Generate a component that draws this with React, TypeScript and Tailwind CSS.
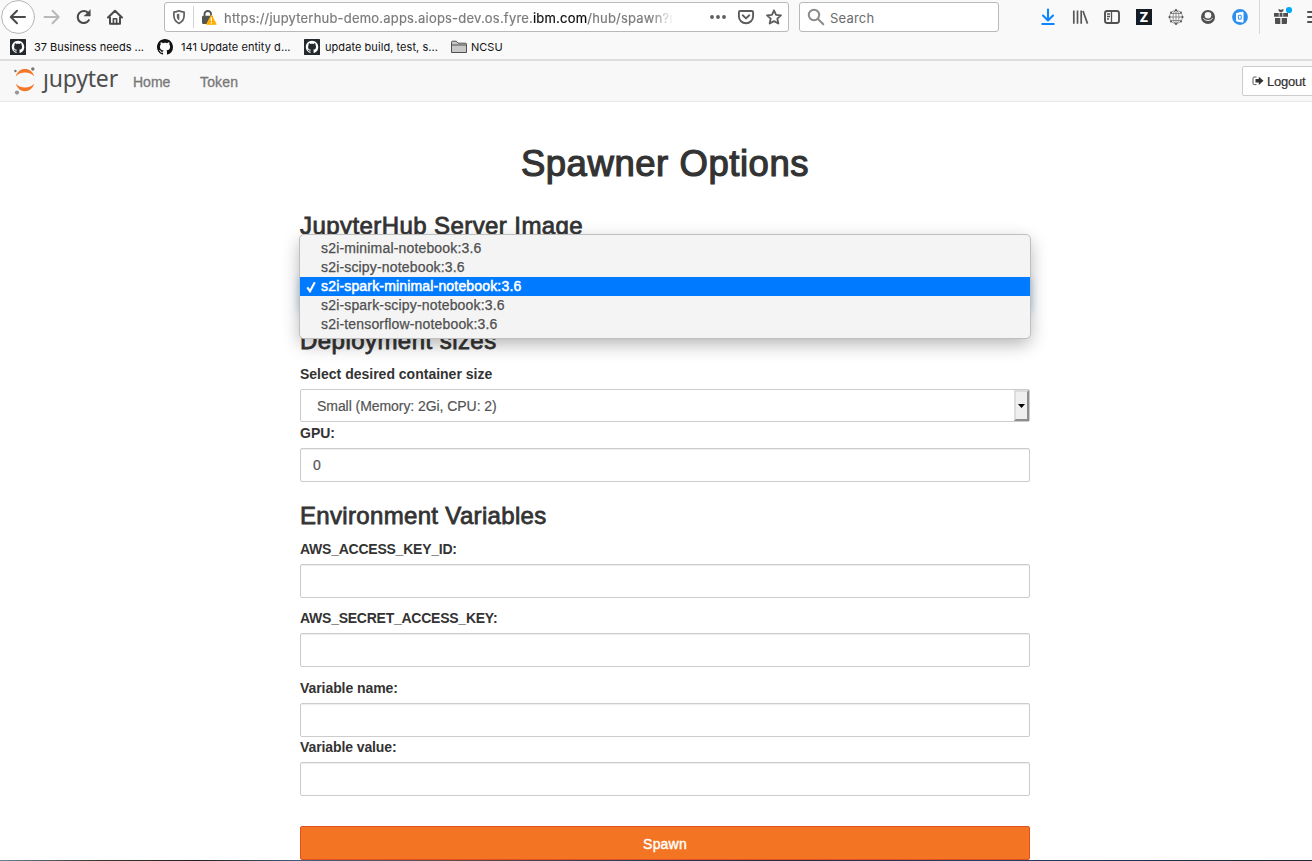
import type { ReactNode } from 'react';

const ui = "font-['Inter',sans-serif]";

function GithubMark({ boxed }: { boxed?: boolean }) {
  const d =
    'M8 0C3.58 0 0 3.58 0 8c0 3.54 2.29 6.53 5.47 7.59.4.07.55-.17.55-.38 0-.19-.01-.82-.01-1.49-2.01.37-2.53-.49-2.69-.94-.09-.23-.48-.94-.82-1.13-.28-.15-.68-.52-.01-.53.63-.01 1.08.58 1.23.82.72 1.21 1.87.87 2.33.66.07-.52.28-.87.51-1.07-1.78-.2-3.64-.89-3.64-3.95 0-.87.31-1.59.82-2.15-.08-.2-.36-1.02.08-2.12 0 0 .67-.21 2.2.82.64-.18 1.32-.27 2-.27s1.36.09 2 .27c1.53-1.04 2.2-.82 2.2-.82.44 1.1.16 1.92.08 2.12.51.56.82 1.27.82 2.15 0 3.07-1.87 3.75-3.65 3.95.29.25.54.73.54 1.48 0 1.07-.01 1.93-.01 2.2 0 .21.15.46.55.38A8.01 8.01 0 0 0 16 8c0-4.42-3.58-8-8-8z';
  return (
    <svg width="16" height="16" viewBox="0 0 16 16" className="shrink-0">
      {boxed && <rect width="16" height="16" rx="0.5" fill="#24292e" />}
      <path d={d} fill={boxed ? '#fff' : '#111'} transform={boxed ? 'translate(1.8 1.8) scale(.78)' : undefined} />
    </svg>
  );
}

function Bookmark({ icon, label, className }: { icon: ReactNode; label: string; className: string }) {
  return (
    <div className={`flex shrink-0 items-center ${className}`}>
      {icon}
      <span className="whitespace-nowrap pt-[2px] text-[11px] text-[#111]">{label}</span>
    </div>
  );
}

function Toolbar() {
  return (
    <div className="flex h-[34px] items-center overflow-hidden">
      <div className="flex w-[164px] shrink-0 items-center">
        <svg width="130" height="34" viewBox="0 0 130 34" fill="none" strokeLinecap="round" strokeLinejoin="round">
          <circle cx="18" cy="17" r="16.4" fill="#fff" stroke="#b5b5b5" />
          <path d="M25 17H11.200M17 10.800 10.800 17l6.200 6.200" stroke="#4a4a4a" strokeWidth="2" />
          <path d="M44.500 17h13.500M52.500 10.800 58.700 17l-6.200 6.200" stroke="#b9b9b9" strokeWidth="2" />
          <path d="M88.800 20.200A6 6 0 1 1 88 12.800" stroke="#4a4a4a" strokeWidth="2.100" />
          <path d="M90.300 10v6h-6z" fill="#4a4a4a" stroke="#4a4a4a" strokeWidth=".5" />
          <path d="M108 17.500 115 10.700l7 6.800M110 17v6.800h10V17" stroke="#4a4a4a" strokeWidth="2" />
          <path d="M113.400 24v-5.200h3.200V24" stroke="#4a4a4a" strokeWidth="1.600" />
        </svg>
      </div>
      <div className="flex h-[30px] w-[625px] shrink-0 items-center rounded-[3px] border border-[#b9b9b9] bg-white">
        <svg width="59" height="28" viewBox="165 3 59 28" fill="none" className="shrink-0">
          <path d="M173.900 12.200c2-.2 3.500-.6 5.100-1.400 1.600.8 3.100 1.200 5.100 1.400v3.300c0 3.800-1.800 6.300-5.100 7.900-3.300-1.600-5.100-4.100-5.100-7.900z" stroke="#606060" strokeWidth="1.700" strokeLinejoin="round" />
          <path d="M179.300 13.500c-1 .5-1.600.7-2.500.8v1.700c0 2.100.8 3.500 2.500 4.600z" fill="#606060" />
          <path d="M193.500 6v22" stroke="#d2d2d2" />
          <path d="M204.500 16.500v-2.200a3.300 3.300 0 0 1 6.600 0v2" stroke="#555" strokeWidth="1.900" />
          <rect x="202" y="15.800" width="11" height="8.200" rx="1.300" fill="#555" />
          <path d="m211.400 15.300 4.600 8.900h-9.200z" fill="#ffae00" stroke="#ffae00" strokeWidth="1.200" strokeLinejoin="round" />
          <path d="M211.400 17.500v3.600M211.400 22.100v1.300" stroke="#fff" strokeWidth="1.200" />
        </svg>
        <div className="w-[450px] overflow-hidden whitespace-nowrap pt-[2px] text-[13px] leading-[26px] tracking-[0.2px] text-[#7b7b7b] [-webkit-text-stroke:0.2px] [mask-image:linear-gradient(to_right,#000_95%,transparent)]">
          https://jupyterhub-demo.apps.aiops-dev.os.fyre.<span className="text-[#0c0c0d]">ibm.com</span>/hub/spawn?r
        </div>
        <svg width="114" height="28" viewBox="674 3 114 28" fill="none" className="shrink-0">
          <g fill="#5c5c5c"><circle cx="712" cy="17" r="1.900" /><circle cx="718" cy="17" r="1.900" /><circle cx="724" cy="17" r="1.900" /></g>
          <path d="M740.200 11h11.600q1.300 0 1.300 1.300v3.900a7.100 7.100 0 0 1-14.200 0v-3.900q0-1.300 1.300-1.300z" stroke="#5c5c5c" strokeWidth="1.900" />
          <path d="m742.700 15.300 3.300 3.100 3.300-3.100" stroke="#5c5c5c" strokeWidth="1.900" strokeLinecap="round" strokeLinejoin="round" />
          <path d="m774 10.300 2.050 4.500 4.950.55-3.700 3.300 1.050 4.900-4.350-2.450-4.350 2.450 1.050-4.900-3.700-3.300 4.950-.55z" stroke="#5c5c5c" strokeWidth="1.800" strokeLinejoin="round" />
        </svg>
      </div>
      <div className="ml-[10px] flex h-[30px] w-[200px] shrink-0 items-center rounded-[3px] border border-[#b9b9b9] bg-white">
        <svg width="30" height="28" viewBox="800 3 30 28" fill="none" stroke="#8b8b8b" strokeWidth="2" className="shrink-0">
          <circle cx="814" cy="15" r="5.200" /><path d="m818 19 5.300 5.200" strokeLinecap="round" />
        </svg>
        <span className="pt-[3px] text-[13px] tracking-[0.2px] text-[#6b6b6b]">Search</span>
      </div>
      <svg width="313" height="34" viewBox="999 0 313 34" fill="none" className="shrink-0">
        <path d="M1048 9.500v10M1043 15.500l5 5 5-5M1042.300 24h11.400" stroke="#0a84ff" strokeWidth="2.100" strokeLinecap="round" strokeLinejoin="round" />
        <path d="M1073.800 10.500v13.300M1077.500 10.500v13.300M1081.200 10.500v13.300M1083 11l4.500 12.600" stroke="#585858" strokeWidth="1.700" />
        <rect x="1105" y="11" width="14" height="12" rx="2.200" stroke="#505050" strokeWidth="1.900" />
        <path d="M1111.500 11v12M1107 14h3M1107 16.500h3M1107 19h2" stroke="#505050" strokeWidth="1.300" />
        <rect x="1136" y="9" width="16" height="16" fill="#151c24" />
        <text x="1144" y="21.700" textAnchor="middle" fontFamily="Inter" fontWeight="800" fontSize="13" fill="#fff">Z</text>
        <g stroke="#777" strokeWidth=".8">
          <circle cx="1176" cy="17" r="6.500" /><ellipse cx="1176" cy="17" rx="3" ry="6.500" />
          <path d="M1176 10v14M1169 17h14M1170.500 13.500h11M1170.500 20.500h11" />
        </g>
        <g fill="#555">
          <circle cx="1176" cy="10" r="1.100" /><circle cx="1176" cy="24" r="1.100" /><circle cx="1169.500" cy="17" r="1.100" /><circle cx="1182.500" cy="17" r="1.100" />
          <circle cx="1171" cy="12.500" r="1" /><circle cx="1181" cy="12.500" r="1" /><circle cx="1171" cy="21.500" r="1" /><circle cx="1181" cy="21.500" r="1" />
        </g>
        <circle cx="1208" cy="17" r="7" fill="#505050" />
        <circle cx="1208" cy="15.200" r="3.300" fill="#f9f9fa" />
        <path d="M1203.300 18.200q1.500 2.300 4.700 2.300t4.700-2.300" stroke="#f9f9fa" strokeWidth="1" />
        <circle cx="1240" cy="17" r="7.900" fill="#2d8ff0" />
        <path d="M1236.500 13.500 1243 12v10.200l-6.500-1.300z" fill="#fff" stroke="#fff" strokeLinejoin="round" />
        <path d="M1238.400 15.300h2.800v3.800h-2.800z" stroke="#2d8ff0" />
        <path d="M1259.500 0v34" stroke="#d7d7d7" />
        <path d="M1274 13h14v3.700h-14zM1275 18h5.300v6H1276q-1 0-1-1zM1281.700 18h5.300v5q0 1-1 1h-4.300z" fill="#505050" />
        <path d="M1279.200 13v3.700M1282.800 13v3.700" stroke="#f9f9fa" strokeWidth=".8" />
        <path d="M1278.500 9.300h1.500l1 .9 1-.9h1.500v1.200l-1.500 1.800h-2l-1.500-1.800z" fill="#505050" />
        <circle cx="1289" cy="10" r="3.100" fill="#00a9f7" />
        <path d="M1308 12h7M1308 17h7M1308 22h7" stroke="#505050" strokeWidth="2" strokeLinecap="round" />
      </svg>
    </div>
  );
}

function BrowserChrome() {
  return (
    <header className={`h-[61px] border-b-2 border-[#dedede] bg-[#f9f9fa] ${ui}`}>
      <Toolbar />
      <div className="flex h-[25px] items-center pl-[10px]">
        <Bookmark icon={<GithubMark boxed />} label="37 Business needs ..." className="w-[147px] gap-2 tracking-[-0.02px]" />
        <Bookmark icon={<GithubMark />} label="141 Update entity d..." className="w-[147px] gap-2 tracking-[0.06px]" />
        <Bookmark icon={<GithubMark boxed />} label="update build, test, s..." className="w-[147px] gap-[5px] tracking-[0.06px]" />
        <div className="flex items-center gap-1">
          <svg width="16" height="16" viewBox="0 0 16 16" fill="#c8c8ca" stroke="#505050" strokeWidth="1">
            <path d="M.5 13.500V3.200q0-1 1-1h3.700l1.800 2h7.500q1 0 1 1v8.300zM.5 6h15" strokeLinejoin="round" />
          </svg>
          <span className="pt-[2px] text-[11px] text-[#111]">NCSU</span>
        </div>
      </div>
    </header>
  );
}

function Navbar() {
  return (
    <nav className="flex h-[41px] items-center overflow-hidden border-b border-[#e7e7e7] bg-[#f8f8f8]">
      <div className="flex h-10 w-[133px] shrink-0 items-center">
        <svg width="41" height="40" viewBox="0 61 41 40" className="shrink-0">
          <path d="M15.800 76.200C17 71.700 20.700 69 25 69s8 2.700 9.200 7.200c-2-2.300-5.300-3.700-9.200-3.700s-7.200 1.400-9.200 3.700zM15.800 83.800c2 2.300 5.300 3.700 9.200 3.700s7.200-1.400 9.200-3.700C33 88.300 29.300 91.200 25 91.200s-8-2.900-9.200-7.400z" fill="#f37726" />
          <circle cx="32.800" cy="69" r="1.700" fill="#767677" />
          <circle cx="15.400" cy="71" r="1.200" fill="#767677" />
          <circle cx="17" cy="92.600" r="2.100" fill="#989798" />
        </svg>
        <span className="relative -mt-[6px] ml-[2px] font-['Noto_Sans',sans-serif] text-[23px] leading-10 tracking-[-0.2px] text-[#4e4e4e]">
          jupyter
          <span className="absolute -left-1 top-[8px] h-[7px] w-[11px] bg-[#f8f8f8]" />
        </span>
      </div>
      <a className="w-[67px] pt-[2px] text-sm text-[#777] [-webkit-text-stroke:0.3px_#777]">Home</a>
      <a className="pt-[2px] text-sm tracking-[0.15px] text-[#777] [-webkit-text-stroke:0.3px_#777]">Token</a>
      <button className="ml-auto -mr-[3px] flex h-[30px] w-[73px] shrink-0 items-center gap-[3px] rounded-[2px] border border-[#ccc] bg-white pl-[9px] text-[13px] tracking-[-0.25px] text-[#333] [-webkit-text-stroke:0.2px_#333]">
        <svg width="12" height="12" viewBox="0 0 12 12" className="shrink-0">
          <path d="M4.500 2H2.300Q1 2 1 3.300v5Q1 9.600 2.300 9.600h2.200" fill="none" stroke="#555" strokeWidth="1" />
          <path d="M3.500 4.100h3.300V1.700L11.500 5.800 6.800 9.900V7.500H3.500z" fill="#333" />
        </svg>
        <span className="pt-[2px]">Logout</span>
      </button>
    </nav>
  );
}

function Heading({ children, className = '' }: { children: ReactNode; className?: string }) {
  return (
    <h3 className={`whitespace-nowrap text-[24px] leading-[26px] [-webkit-text-stroke:0.8px_#333] ${className}`}>{children}</h3>
  );
}

function Label({ children, className = '' }: { children: ReactNode; className?: string }) {
  return <label className={`block h-5 text-sm font-bold leading-5 ${className}`}>{children}</label>;
}

function Field({ label, value, className = '', labelClass = '' }: { label: string; value?: string; className?: string; labelClass?: string }) {
  return (
    <div className={className}>
      <Label className={labelClass}>{label}</Label>
      <div className="mt-[5px] h-[34px] rounded-[2px] border border-[#ccc] bg-white px-3 text-sm leading-8 text-[#555] shadow-[inset_0_1px_1px_rgba(0,0,0,0.075)] [-webkit-text-stroke:0.2px_#555]">
        {value}
      </div>
    </div>
  );
}

const images = [
  's2i-minimal-notebook:3.6',
  's2i-scipy-notebook:3.6',
  's2i-spark-minimal-notebook:3.6',
  's2i-spark-scipy-notebook:3.6',
  's2i-tensorflow-notebook:3.6',
];

function ImageMenu() {
  return (
    <div className="absolute left-0 top-[21px] z-10 -ml-px h-[105px] w-[732px] overflow-hidden rounded-[5px] border border-[#bfbfbf] bg-[#f4f4f4] pt-[4px] text-sm leading-[19px] text-[#4f4f4f]">
      {images.map((name, i) =>
        i === 2 ? (
          <div key={name} className="flex h-[19px] items-center bg-[#007aff] pl-[6px] tracking-[0.17px] text-white [-webkit-text-stroke:0.5px_#fff]">
            <svg width="15" height="14" viewBox="0 0 15 14" fill="none" className="shrink-0">
              <path d="m1.300 7.300 2.700 3.900L8.800 2.300" stroke="#fff" strokeWidth="2.100" />
            </svg>
            {name}
          </div>
        ) : (
          <div key={name} className="h-[19px] pl-[21px] tracking-[0.17px] [-webkit-text-stroke:0.25px_#4f4f4f]">{name}</div>
        ),
      )}
    </div>
  );
}

export default function App() {
  return (
    <div className="flex h-[861px] w-[1312px] flex-col overflow-hidden bg-white font-['Liberation_Sans',Arial,sans-serif] text-[#333]">
      <BrowserChrome />
      <Navbar />
      <main className="ml-[300px] h-[758px] w-[730px] shrink-0">
        <h1 className="pt-[42px] text-center text-[36.5px] leading-[40px] tracking-[0.55px] [-webkit-text-stroke:1.2px_#333]">Spawner Options</h1>
        <section className="relative mt-[29px] h-[115px]">
          <Heading className="tracking-[0.42px]">JupyterHub Server Image</Heading>
          <div className="mt-[39px] h-[34px] rounded-[2px] border border-[#66afe9] shadow-[0_0_8px_rgba(102,175,233,0.6)]" />
          <div className="absolute left-0 top-[22px] h-[103px] w-[730px] rounded-[5px] shadow-[0_6px_18px_rgba(0,0,0,0.3)]" />
          <ImageMenu />
        </section>
        <section>
          <Heading className="tracking-[0.45px]">Deployment sizes</Heading>
          <div className="mt-[10px]">
            <Label>Select desired container size</Label>
          </div>
          <div className="mt-[5px] flex h-[33px] justify-between rounded-[2px] border border-[#ccc] pl-4 text-sm leading-8 tracking-[-0.06px] text-[#555] [-webkit-text-stroke:0.2px_#555]">
            Small (Memory: 2Gi, CPU: 2)
            <div className="flex w-[15px] items-center justify-center border-2 border-b-[#8d8d8d] border-l-[#dcdcdc] border-r-[#8d8d8d] border-t-[#dcdcdc] bg-[#efefef]">
              <svg width="7" height="4" viewBox="0 0 7 4"><path d="M0 0h7L3.500 4z" fill="#000" /></svg>
            </div>
          </div>
          <Field className="mt-px" label="GPU:" value="0" />
        </section>
        <section className="mt-[21px]">
          <Heading className="tracking-[0.33px]">Environment Variables</Heading>
          <Field className="mt-[10px]" label="AWS_ACCESS_KEY_ID:" labelClass="tracking-[-0.24px]" />
          <Field className="mt-[10px]" label="AWS_SECRET_ACCESS_KEY:" labelClass="tracking-[-0.25px]" />
          <Field className="mt-[11px]" label="Variable name:" labelClass="tracking-[-0.07px]" />
          <Field label="Variable value:" labelClass="tracking-[-0.1px]" />
        </section>
        <button className="mt-[30px] block h-[34px] w-full rounded-[2px] border border-[#e34f21] bg-[#f37524] pt-[2px] text-sm leading-[30px] tracking-[0.2px] text-white [-webkit-text-stroke:0.4px_#fff]">
          Spawn
        </button>
      </main>
      <div className="h-px shrink-0 bg-[linear-gradient(to_right,#668199,#3c3b32_7%,#24201f_15%,#41607f_23%,#624a43_35%,#253e59_48%,#252c43_60%,#263f66_75%,#1f2633)]" />
    </div>
  );
}
